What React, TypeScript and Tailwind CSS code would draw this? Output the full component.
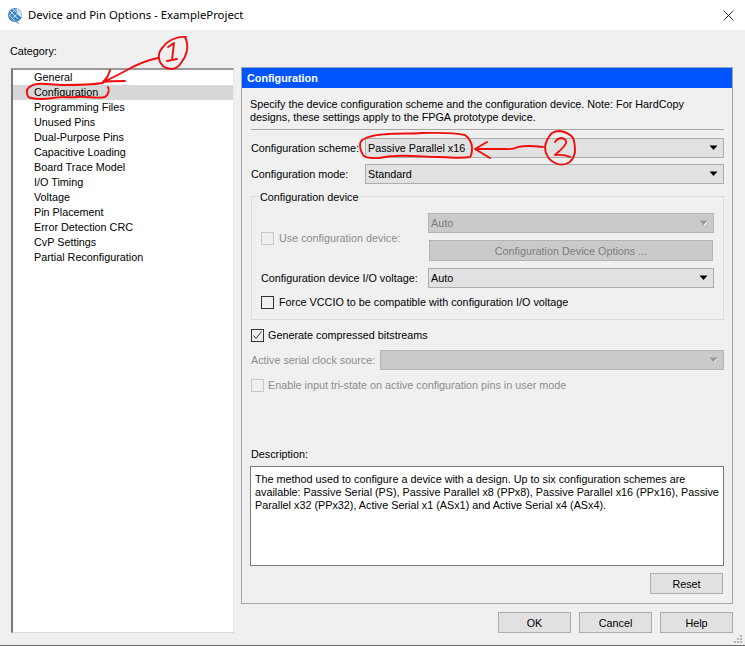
import { ReactNode } from "react"

const categories = [
  "General",
  "Configuration",
  "Programming Files",
  "Unused Pins",
  "Dual-Purpose Pins",
  "Capacitive Loading",
  "Board Trace Model",
  "I/O Timing",
  "Voltage",
  "Pin Placement",
  "Error Detection CRC",
  "CvP Settings",
  "Partial Reconfiguration",
]

function Arrow({ disabled }: { disabled?: boolean }) {
  return (
    <svg width="10" height="6" viewBox="0 0 10 6" className="shrink-0">
      <path d="M0.5 0.5H8.5L4.5 5Z" fill={disabled ? "#9a9a9a" : "#000"} />
      {disabled && <path d="M5 5L8.5 1.5" stroke="#fff" strokeWidth="1" />}
    </svg>
  )
}

function Combo({ value, disabled, className }: { value?: string; disabled?: boolean; className: string }) {
  return (
    <div
      className={`flex h-[20px] items-center justify-between border pl-[2px] pr-[4px] ${
        disabled ? "border-[#b4b4b4] bg-[#cacaca] text-[#7d7d7d]" : "border-[#adadad] bg-[#e1e1e1] text-black"
      } ${className}`}
    >
      <span>{value}</span>
      <Arrow disabled={disabled} />
    </div>
  )
}

function Check({ checked, disabled }: { checked?: boolean; disabled?: boolean }) {
  return (
    <span
      className={`flex h-[13px] w-[13px] shrink-0 items-center justify-center border ${
        disabled ? "border-[#c8c8c8] bg-[#f0f0f0]" : "border-[#333333] bg-[#f0f0f0]"
      }`}
    >
      {checked && (
        <svg width="11" height="11" viewBox="0 0 11 11">
          <path d="M1.5 5.5L4 8.5L9.5 1.5" fill="none" stroke="#333" strokeWidth="1" />
        </svg>
      )}
    </span>
  )
}

function Button({ children, className }: { children: ReactNode; className: string }) {
  return (
    <div className={`flex h-[21px] items-center justify-center border border-[#adadad] bg-[#e1e1e1] pt-[2px] ${className}`}>
      {children}
    </div>
  )
}

// the red pen marks drawn on top of the screenshot
function Annotations() {
  return (
    <svg width="745" height="646" className="pointer-events-none absolute left-0 top-0" fill="none" stroke="#f20d0d" strokeWidth="1.9" strokeLinecap="round" strokeLinejoin="round">
      <path d="M186 37C178 36 168 40 163 47C158 52 157 60 163 66C168 70 176 71 181 63C186 57 190 47 185 37" />
      <path d="M168 47L174 43L172 60M167 61L177 59" />
      <path d="M158 58C147 60 136 65 127 70C118 75 110 79 103 82M110 70C109 75 106 79 103 82C110 81 118 81 125 81" />
      <path d="M103 83C90 85 75 85 63 85C52 85 44 83 37 84C30 85 26 89 27 92C27 96 28 98 31 98C40 100 47 99 53 98C62 96 70 98 77 97C87 96 97 99 105 97C108 95 110 90 108 87" />
      <path d="M362 140C370 135 378 135 388 134C400 133 410 134 422 133C435 133 452 132 465 135C469 138 472 143 472 148C472 152 472 155 470 157C460 159 450 157 438 157C425 157 410 155 395 156C385 156 380 159 372 158C366 158 363 156 362 153C360 150 360 147 360 145C360 143 361 141 362 140" />
      <path d="M543 147C535 146 526 145 518 147C512 150 508 149 505 149C495 149 485 149 475 149M487 142L475 149L490 158" />
      <path d="M545 147C546 140 549 136 552 133C555 131 558 131 560 131C566 132 571 135 573 138C575 142 575 148 575 152C574 157 572 161 568 163C564 165 559 165 555 163C551 161 548 158 547 155C545 152 545 150 545 147" />
      <path d="M555 142C557 139 560 138 562 138C565 139 567 141 566 143C564 148 559 151 555 155C559 155 564 154 570 157" />
    </svg>
  )
}

export default function App() {
  return (
    <div className="relative flex h-[646px] w-[745px] flex-col overflow-hidden whitespace-nowrap bg-[#f0f0f0] font-['Liberation_Sans',sans-serif] text-[10.8px] leading-[13px] text-black">
      <div className="flex h-[30px] shrink-0 items-center bg-white pl-[7px] pr-[11px]">
        <svg width="16" height="17" viewBox="0 0 16 17" className="mr-[5px]">
          <circle cx="8" cy="8" r="7" fill="#3f86c4" />
          <path d="M3 4L11 12M6 2L14 10M2 8L8 14M5 12L13 4M2 9L9 2" stroke="#cfe2f2" strokeWidth="0.9" />
          <path d="M9 1.5A7 7 0 0 1 14.5 10L11 8Z" fill="#d5e5f2" />
          <path d="M8 14L12 16.5" stroke="#7a9ab8" strokeWidth="1.2" />
        </svg>
        <span className="-mt-[1px] font-['Noto_Sans',sans-serif] text-[11.35px]">Device and Pin Options - ExampleProject</span>
        <svg width="11" height="11" viewBox="0 0 11 11" className="ml-auto" stroke="#222" strokeWidth="0.9">
          <path d="M0.5 0.5L10.5 10.5M10.5 0.5L0.5 10.5" />
        </svg>
      </div>

      <div className="flex min-h-0 flex-1 flex-col border-b border-[#666666] pl-[11px] pr-[12px]">
        <div className="flex flex-1 gap-[7px] pt-[15px]">
          <div className="flex w-[223px] flex-col">
            <div className="-ml-[1px] h-[23px]">Category:</div>
            <div className="flex h-[565px] flex-col border-b border-l-2 border-r border-t-2 border-b-[#d8d8d8] border-l-[#777777] border-r-[#e8e8e8] border-t-[#9a9a9a] bg-white">
              {categories.map((c) => (
                <div key={c} className={`flex h-[15px] items-center pl-[21px] ${c === "Configuration" ? "bg-[#d7d7d7]" : ""}`}>
                  {c}
                </div>
              ))}
            </div>
          </div>

          <div className="flex flex-1 flex-col pt-[22px]">
            <div className="flex h-[537px] flex-col border border-[#a6a6a6] border-t-[#8fa6c8]">
              <div className="flex h-[20px] shrink-0 items-center bg-[#0055ff] pl-[5px] font-bold text-white">Configuration</div>
              <div className="flex flex-1 flex-col pl-[8px] pr-[8px] pt-[10px]">
                <p className="w-[450px] whitespace-normal">
                  Specify the device configuration scheme and the configuration device. Note: For HardCopy designs, these settings apply to the FPGA prototype device.
                </p>
                <div className="ml-[1px] mt-[5px] h-px bg-[#a8a8a8]" />
                <div className="mt-[8px] flex items-center pl-[1px]">
                  <span className="w-[114px]">Configuration scheme:</span>
                  <Combo value="Passive Parallel x16" className="w-[359px]" />
                </div>
                <div className="mt-[6px] flex items-center pl-[1px]">
                  <span className="w-[114px]">Configuration mode:</span>
                  <Combo value="Standard" className="w-[359px]" />
                </div>

                <div className="relative ml-[1px] mt-[12px] h-[124px] border border-[#dcdcdc] pl-[9px] pr-[9px]">
                  <span className="absolute -top-[6px] left-[7px] bg-[#f0f0f0] px-[1px]">Configuration device</span>
                  <div className="mt-[16px] flex">
                    <div className="flex w-[167px] items-center gap-[5px] pt-[2px] text-[#8c8c8c]">
                      <Check disabled />
                      <span>Use configuration device:</span>
                    </div>
                    <div className="flex flex-1 flex-col gap-[7px]">
                      <Combo value="Auto" disabled className="w-[286px]" />
                      <div className="ml-[1px] flex h-[21px] w-[284px] items-center justify-center border border-[#b4b4b4] bg-[#cacaca] pt-[2px] text-[#7d7d7d]">
                        Configuration Device Options ...
                      </div>
                    </div>
                  </div>
                  <div className="mt-[7px] flex items-center">
                    <span className="w-[167px]">Configuration device I/O voltage:</span>
                    <Combo value="Auto" className="w-[286px]" />
                  </div>
                  <div className="mt-[8px] flex items-center gap-[5px]">
                    <Check />
                    <span>Force VCCIO to be compatible with configuration I/O voltage</span>
                  </div>
                </div>

                <div className="ml-[1px] mt-[9px] flex items-center gap-[4px]">
                  <Check checked />
                  <span>Generate compressed bitstreams</span>
                </div>
                <div className="mt-[8px] flex items-center pl-[1px] text-[#8c8c8c]">
                  <span className="w-[129px]">Active serial clock source:</span>
                  <Combo disabled className="w-[344px]" />
                </div>
                <div className="ml-[1px] mt-[9px] flex items-center gap-[4px] text-[#8c8c8c]">
                  <Check disabled />
                  <span>Enable input tri-state on active configuration pins in user mode</span>
                </div>

                <div className="mt-[56px] pl-[1px]">Description:</div>
                <div className="mt-[5px] h-[100px] whitespace-normal border border-[#7a7a7a] bg-white pl-[4px] pr-[1px] pt-[6px]">
                  The method used to configure a device with a design. Up to six configuration schemes are available: Passive Serial (PS), Passive Parallel x8 (PPx8), Passive Parallel x16 (PPx16), Passive Parallel x32 (PPx32), Active Serial x1 (ASx1) and Active Serial x4 (ASx4).
                </div>
                <div className="mt-[7px] flex justify-end pr-[1px]">
                  <Button className="w-[73px]">Reset</Button>
                </div>
              </div>
            </div>
            <div className="mt-[8px] flex justify-end gap-[8px]">
              <Button className="w-[73px]">OK</Button>
              <Button className="w-[73px]">Cancel</Button>
              <Button className="w-[73px]">Help</Button>
            </div>
          </div>
        </div>
      </div>
      <svg width="9" height="9" viewBox="0 0 9 9" fill="#b4b4b4" className="absolute bottom-[2px] right-[2px]">
        <path d="M6 0h2v2H6zM3 3h2v2H3zM6 3h2v2H6zM0 6h2v2H0zM3 6h2v2H3zM6 6h2v2H6z" />
      </svg>
      <Annotations />
    </div>
  )
}
